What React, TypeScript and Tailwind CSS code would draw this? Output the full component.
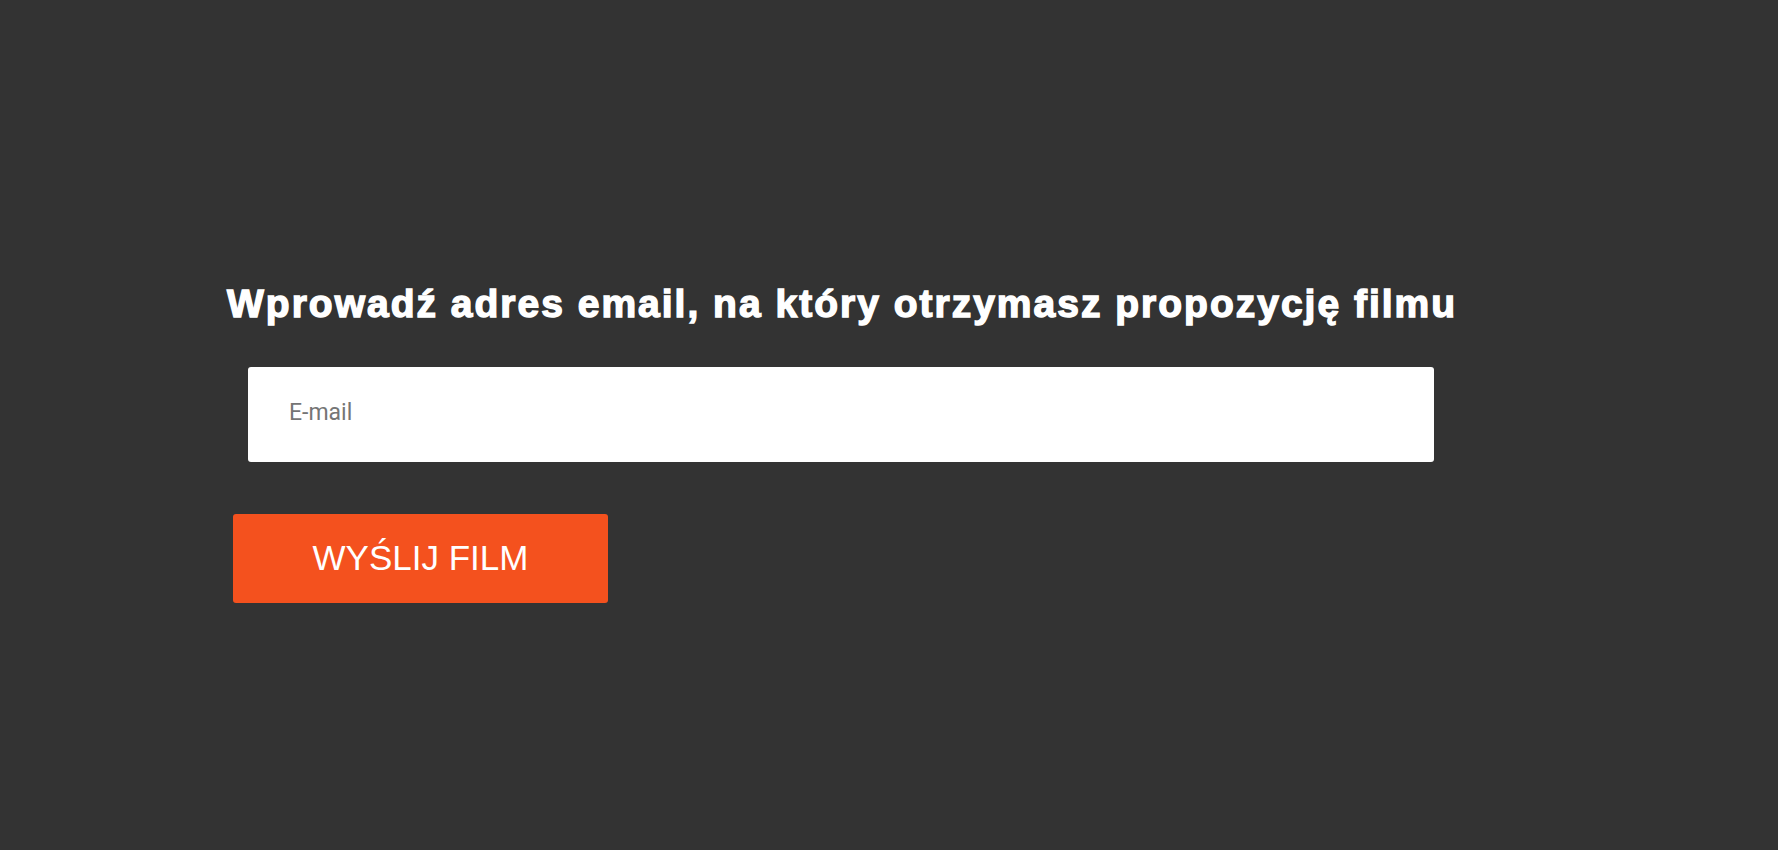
import React from "react";

const App = () => {
  return (
    <div className="min-h-screen w-full bg-[#333333] pt-[281px] pl-[227px]">
      {/* HEADING */}
      <h2 className="font-['Liberation_Sans',Arial,sans-serif] text-[39px] leading-[46px] font-bold tracking-[2px] text-white [-webkit-text-stroke:1.4px_white]">
        Wprowadź adres email, na który otrzymasz propozycję filmu
      </h2>

      {/* FORM */}
      <form className="flex flex-col items-start" onSubmit={(e) => e.preventDefault()}>
        <input
          type="email"
          placeholder="E-mail"
          className="mt-[40px] ml-[21px] h-[95px] w-[1186px] rounded-[3px] bg-white pl-[41px] pb-[5px] font-['Roboto',sans-serif] text-[23px] text-[#333] outline-none placeholder:text-[#757575]"
        />

        <button
          type="submit"
          className="mt-[52px] ml-[6px] h-[89px] w-[375px] rounded-[3px] bg-[#f4511e] font-['Liberation_Sans',Arial,sans-serif] text-[35px] uppercase text-white"
        >
          Wyślij film
        </button>
      </form>
    </div>
  );
};

export default App;
